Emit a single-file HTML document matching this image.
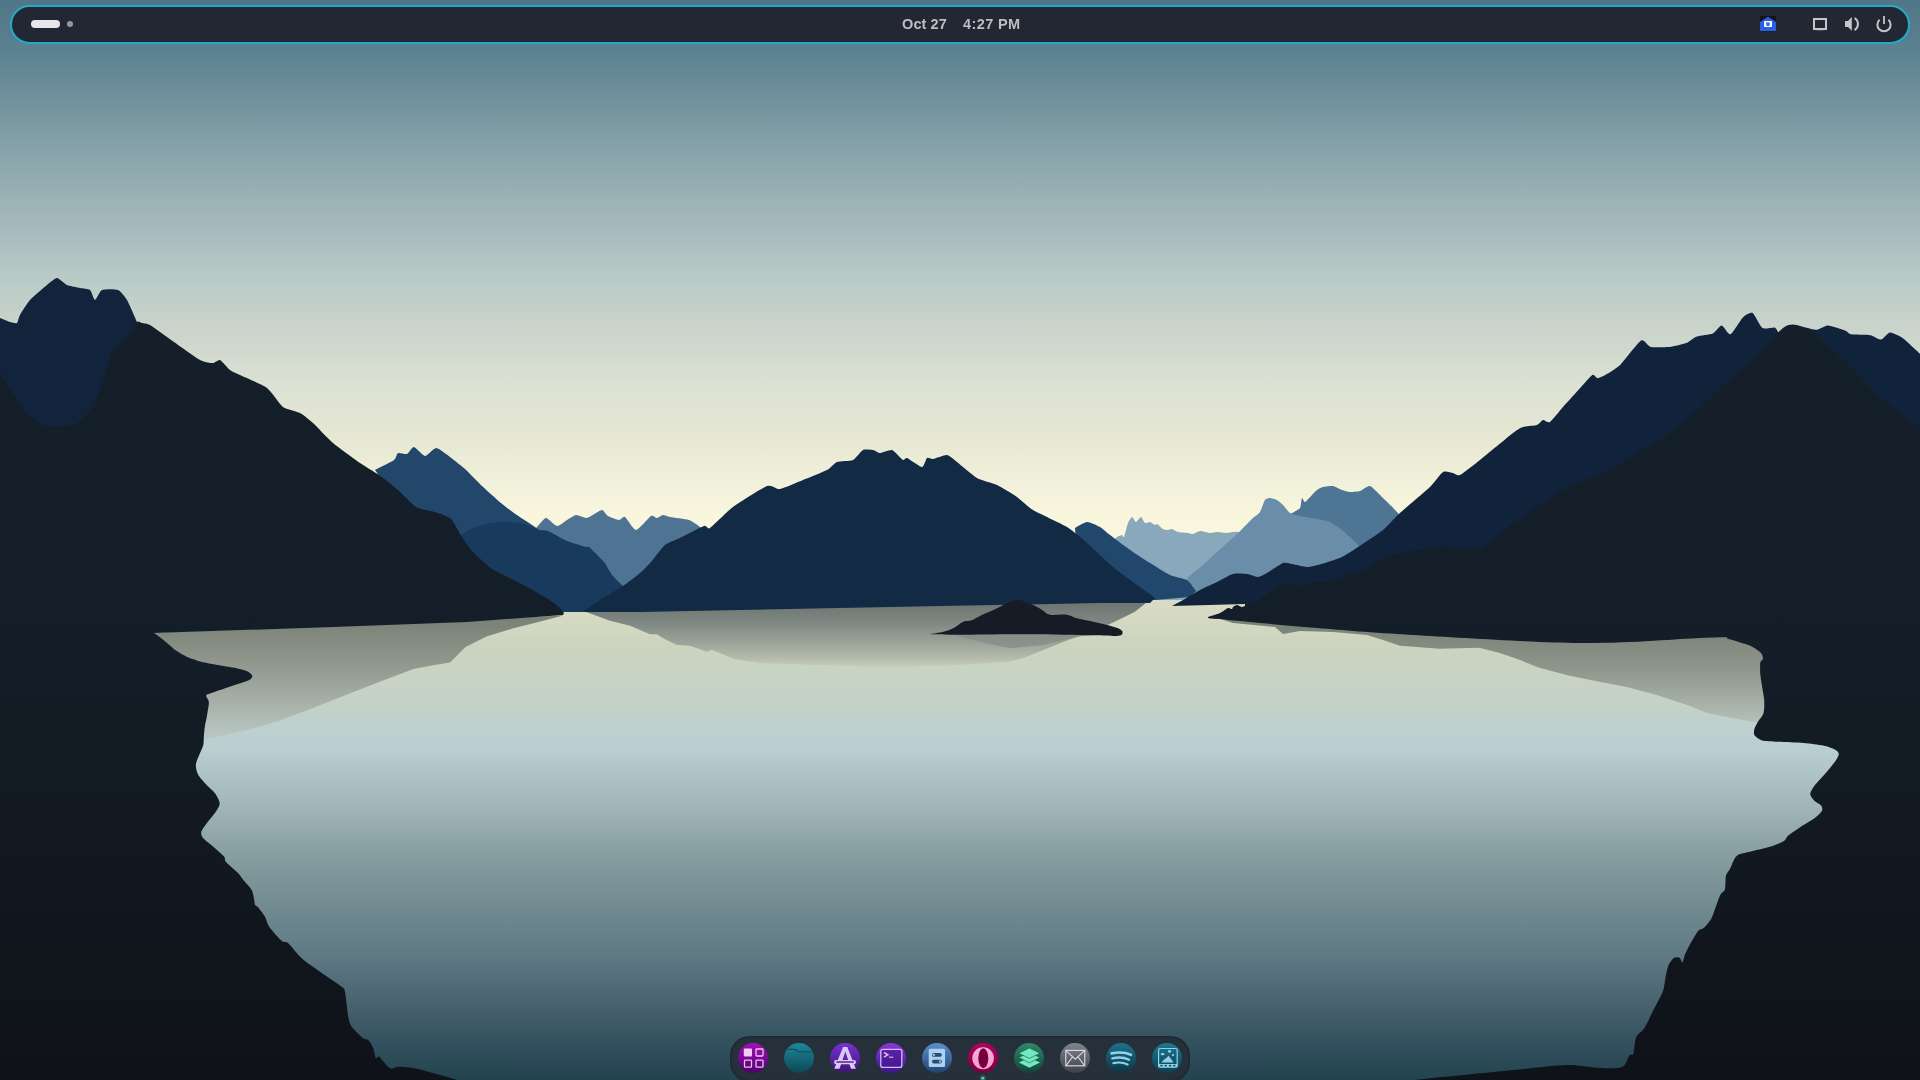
<!DOCTYPE html>
<html><head><meta charset="utf-8"><title>Desktop</title>
<style>
html,body{margin:0;padding:0;width:1920px;height:1080px;overflow:hidden;background:#1a2430;font-family:"Liberation Sans",sans-serif;}
.wp{position:absolute;left:0;top:0;display:block;}
.panel{position:absolute;left:10px;top:5px;width:1900px;height:39px;box-sizing:border-box;border:2px solid #23aac6;border-radius:20px;background:#222733;}
.ws{position:absolute;left:31px;top:20px;width:29px;height:8px;border-radius:4px;background:#e8e6ea;}
.wsd{position:absolute;left:67px;top:21px;width:6px;height:6px;border-radius:3px;background:#98989c;}
.clock{position:absolute;top:15px;height:18px;line-height:18px;font-size:14.5px;letter-spacing:0.55px;font-weight:bold;color:#bdbdc2;white-space:nowrap;will-change:transform;}
.dock{position:absolute;left:730px;top:1036px;width:460px;height:46px;border-radius:20px;background:#25303a;box-shadow:inset 0 0 2px 1px rgba(20,28,36,0.6);}
.ov{position:absolute;left:0;top:0;}
</style></head><body>
<svg class="wp" width="1920" height="1080" viewBox="0 0 1920 1080">
<defs>
<linearGradient id="sky" gradientUnits="userSpaceOnUse" x1="0" y1="0" x2="0" y2="620">
<stop offset="0.0000" stop-color="#4f7688"/>
<stop offset="0.0710" stop-color="#5a7f8f"/>
<stop offset="0.0968" stop-color="#5e8594"/>
<stop offset="0.1613" stop-color="#71929c"/>
<stop offset="0.2258" stop-color="#82a0a7"/>
<stop offset="0.2903" stop-color="#94acb1"/>
<stop offset="0.3226" stop-color="#9ab3b6"/>
<stop offset="0.3710" stop-color="#a7babd"/>
<stop offset="0.4194" stop-color="#b3c5c4"/>
<stop offset="0.4677" stop-color="#bdcdc8"/>
<stop offset="0.5161" stop-color="#c7d2ca"/>
<stop offset="0.5726" stop-color="#d2dacf"/>
<stop offset="0.6290" stop-color="#dde2d4"/>
<stop offset="0.6774" stop-color="#e3e5d3"/>
<stop offset="0.7258" stop-color="#e9ead5"/>
<stop offset="0.7742" stop-color="#f1f0da"/>
<stop offset="0.8306" stop-color="#f9f6de"/>
<stop offset="0.8710" stop-color="#fbf7df"/>
<stop offset="1.0000" stop-color="#fbf7df"/>
</linearGradient>
<linearGradient id="water" gradientUnits="userSpaceOnUse" x1="0" y1="590" x2="0" y2="1080">
<stop offset="0.0000" stop-color="#dadcc4"/>
<stop offset="0.0510" stop-color="#d7dac2"/>
<stop offset="0.1102" stop-color="#ccd4bf"/>
<stop offset="0.1714" stop-color="#c8d3c2"/>
<stop offset="0.2327" stop-color="#c4d1c7"/>
<stop offset="0.2776" stop-color="#bed0ce"/>
<stop offset="0.3224" stop-color="#bacfd2"/>
<stop offset="0.3959" stop-color="#aabfc2"/>
<stop offset="0.4571" stop-color="#9cb2b5"/>
<stop offset="0.5184" stop-color="#8ca3a6"/>
<stop offset="0.5776" stop-color="#7f979b"/>
<stop offset="0.6327" stop-color="#748d93"/>
<stop offset="0.7551" stop-color="#5d7882"/>
<stop offset="0.8367" stop-color="#4a6470"/>
<stop offset="0.9184" stop-color="#34525f"/>
<stop offset="1.0000" stop-color="#23434f"/>
</linearGradient>
<linearGradient id="land" gradientUnits="userSpaceOnUse" x1="0" y1="320" x2="0" y2="1080">
<stop offset="0" stop-color="#141f29"/>
<stop offset="0.42" stop-color="#141e28"/>
<stop offset="1" stop-color="#0f1218"/>
</linearGradient>
<linearGradient id="rL" gradientUnits="userSpaceOnUse" x1="0" y1="615" x2="0" y2="740">
<stop offset="0" stop-color="#787f75"/>
<stop offset="0.36" stop-color="#8e968b"/>
<stop offset="0.68" stop-color="#a5afa7"/>
<stop offset="1" stop-color="#bac8c6"/>
</linearGradient>
<linearGradient id="rC" gradientUnits="userSpaceOnUse" x1="0" y1="605" x2="0" y2="668">
<stop offset="0" stop-color="#6f7773"/>
<stop offset="0.286" stop-color="#808884"/>
<stop offset="0.556" stop-color="#979f96"/>
<stop offset="0.825" stop-color="#b2b9ab"/>
<stop offset="1" stop-color="#c8cfbd"/>
</linearGradient>
<linearGradient id="rR" gradientUnits="userSpaceOnUse" x1="0" y1="622" x2="0" y2="723">
<stop offset="0" stop-color="#788076"/>
<stop offset="0.47" stop-color="#8f978c"/>
<stop offset="0.76" stop-color="#a3ada3"/>
<stop offset="1" stop-color="#b5c0b9"/>
</linearGradient>
</defs>
<rect x="0" y="0" width="1920" height="620" fill="url(#sky)"/>
<rect x="0" y="590" width="1920" height="490" fill="url(#water)"/>
<polygon fill="url(#rL)" points="150,633 563.3,615.6 538.5,622 512.5,628.6 486.5,636.5 465.6,646.9 450,662.5 434.4,665.1 413.5,669 382.3,680.7 345.8,695 309.4,709.4 278.1,721.1 246.9,730.2 200,740.6 150,745"/>
<polygon fill="url(#rC)" points="578,609 1153.3,597 1135,611.7 1116.7,620.8 1093.3,631.7 1068.3,640 1043.3,650 1026.7,656.7 1010,661.7 940,666 880,667 760,663.3 735,659.2 711.7,649.7 706.7,651.7 690,645.8 676.7,645 663.3,638.3 656.7,634.2 650,634.2 630,625.8 610,620.8"/>
<polygon fill="url(#rR)" points="1208,618 1217,618 1233,623 1275,627 1283,634 1300,631 1333,632 1367,635 1383,640 1400,645.7 1439.6,648.7 1479.2,647.7 1499,652.7 1518.8,659.6 1538.6,667.5 1568.3,675.4 1598,681.4 1627.7,687.3 1657.4,695.2 1687.1,705.1 1706.9,713.1 1736.6,719 1762.4,723 1800,723 1800,630 1727,630"/>
<path fill="#8aa8bc" d="M1110,545 C1110.7,544.2 1115.8,538.0 1117.0,537.0 C1118.2,536.0 1121.3,535.0 1122.0,535.0 C1122.7,535.0 1123.4,538.2 1124.0,537.0 C1124.6,535.8 1127.2,525.0 1128.0,523.0 C1128.8,521.0 1131.2,517.1 1132.0,517.0 C1132.8,516.9 1135.1,522.0 1136.0,522.0 C1136.9,522.0 1140.1,516.9 1141.0,517.0 C1141.9,517.1 1144.1,522.5 1145.0,523.0 C1145.9,523.5 1149.0,521.8 1150.0,522.0 C1151.0,522.2 1154.3,524.8 1155.0,525.0 C1155.7,525.2 1156.2,523.6 1157.0,524.0 C1157.8,524.4 1161.9,528.4 1163.0,529.0 C1164.1,529.6 1167.1,530.0 1168.0,530.0 C1168.9,530.0 1171.0,528.8 1172.0,529.0 C1173.0,529.2 1176.4,531.6 1178.0,532.0 C1179.6,532.4 1186.5,532.8 1188.0,533.0 C1189.5,533.2 1191.8,534.2 1193.0,534.0 C1194.2,533.8 1198.3,531.1 1200.0,531.0 C1201.7,530.9 1208.3,532.9 1210.0,533.0 C1211.7,533.1 1215.3,532.0 1217.0,532.0 C1218.7,532.0 1224.9,533.0 1227.0,533.0 C1229.1,533.0 1235.7,531.3 1238.0,532.0 C1240.3,532.7 1248.8,539.2 1250.0,540.0 L1250,600 L1110,600 Z"/>
<path fill="#4e7393" d="M530,535 C530.7,534.2 535.4,528.7 537.0,527.0 C538.6,525.3 544.0,518.1 546.0,518.0 C548.0,517.9 554.9,525.8 557.0,526.0 C559.1,526.2 565.1,521.1 567.0,520.0 C568.9,518.9 574.1,515.2 576.0,515.0 C577.9,514.8 584.5,517.9 586.0,518.0 C587.5,518.1 589.4,516.8 591.0,516.0 C592.6,515.2 600.3,510.0 602.0,510.0 C603.7,510.0 606.3,515.0 608.0,516.0 C609.7,517.0 617.3,519.9 619.0,520.0 C620.7,520.1 623.3,516.0 625.0,517.0 C626.7,518.0 633.4,530.1 636.0,530.0 C638.6,529.9 648.9,517.2 651.0,516.0 C653.1,514.8 655.8,518.1 657.0,518.0 C658.2,517.9 661.7,515.1 663.0,515.0 C664.3,514.9 667.4,516.5 670.0,517.0 C672.6,517.5 686.0,519.0 689.0,520.0 C692.0,521.0 697.9,525.0 700.0,527.0 C702.1,529.0 709.0,538.7 710.0,540.0 L700,600 L530,600 Z"/>
<path fill="#4f7595" d="M1285,515 C1285.7,514.8 1290.5,513.7 1292.0,513.0 C1293.5,512.3 1299.0,509.5 1300.0,508.0 C1301.0,506.5 1301.5,498.6 1302.0,498.0 C1302.5,497.4 1304.0,502.3 1305.0,502.0 C1306.0,501.7 1310.8,496.2 1312.0,495.0 C1313.2,493.8 1315.9,490.8 1317.0,490.0 C1318.1,489.2 1321.4,487.4 1323.0,487.0 C1324.6,486.6 1331.1,485.7 1333.0,486.0 C1334.9,486.3 1340.3,489.4 1342.0,490.0 C1343.7,490.6 1348.2,491.9 1350.0,492.0 C1351.8,492.1 1358.0,491.6 1360.0,491.0 C1362.0,490.4 1367.7,485.3 1370.0,486.0 C1372.3,486.7 1380.2,495.3 1383.0,498.0 C1385.8,500.7 1394.3,508.8 1398.0,513.0 C1401.7,517.2 1417.8,537.3 1420.0,540.0 L1420,600 L1300,600 Z"/>
<path fill="#6a8da9" d="M1187,578 C1188.6,576.7 1200.0,567.6 1203.0,565.0 C1206.0,562.4 1213.5,555.2 1217.0,552.0 C1220.5,548.8 1234.4,536.4 1238.0,533.0 C1241.6,529.6 1250.8,520.1 1253.0,518.0 C1255.2,515.9 1258.8,513.8 1260.0,512.0 C1261.2,510.2 1264.0,501.4 1265.0,500.0 C1266.0,498.6 1268.8,498.0 1270.0,498.0 C1271.2,498.0 1275.7,499.3 1277.0,500.0 C1278.3,500.7 1281.7,503.7 1283.0,505.0 C1284.3,506.3 1288.3,511.9 1290.0,513.0 C1291.7,514.1 1297.3,515.4 1300.0,516.0 C1302.7,516.6 1314.0,518.4 1317.0,519.0 C1320.0,519.6 1327.5,520.9 1330.0,522.0 C1332.5,523.1 1339.2,527.7 1342.0,530.0 C1344.8,532.3 1354.2,541.0 1358.0,545.0 C1361.8,549.0 1377.8,567.5 1380.0,570.0 L1400,600 L1200,600 Z"/>
<path fill="#22476b" d="M375,470 C376.9,469.0 391.7,461.7 394.0,460.0 C396.3,458.3 396.7,453.6 398.0,453.0 C399.3,452.4 405.4,454.6 407.0,454.0 C408.6,453.4 412.2,446.8 414.0,447.0 C415.8,447.2 422.8,455.9 425.0,456.0 C427.2,456.1 433.9,448.2 436.0,448.0 C438.1,447.8 443.1,451.9 446.0,454.0 C448.9,456.1 461.4,465.8 465.0,469.0 C468.6,472.2 478.4,482.6 482.0,486.0 C485.6,489.4 497.8,500.3 501.0,503.0 C504.2,505.7 510.6,510.6 514.0,513.0 C517.4,515.4 530.4,523.8 535.0,527.0 C539.6,530.2 557.5,543.2 560.0,545.0 L600,600 L470,600 Z"/>
<path fill="#183a5d" d="M462,535 C463.1,534.3 470.0,529.2 473.0,528.0 C476.0,526.8 488.3,523.6 492.0,523.0 C495.7,522.4 506.8,521.9 510.0,522.0 C513.2,522.1 521.1,523.2 524.0,524.0 C526.9,524.8 536.6,529.3 539.0,530.0 C541.4,530.7 545.2,529.9 548.0,531.0 C550.8,532.1 563.2,539.4 567.0,541.0 C570.8,542.6 583.8,546.4 586.0,547.0 C588.2,547.6 587.2,545.5 589.0,547.0 C590.8,548.5 601.7,559.2 604.0,562.0 C606.3,564.8 610.1,572.6 612.0,575.0 C613.9,577.4 621.9,584.9 623.0,586.0 L600,612 L440,612 L440,540 Z"/>
<path fill="#22476c" d="M1075,528 C1076.2,527.4 1084.5,522.1 1087.0,522.0 C1089.5,521.9 1097.7,525.7 1100.0,527.0 C1102.3,528.3 1106.7,532.5 1110.0,535.0 C1113.3,537.5 1129.0,549.2 1133.0,552.0 C1137.0,554.8 1146.3,560.7 1150.0,563.0 C1153.7,565.3 1166.3,573.3 1170.0,575.0 C1173.7,576.7 1184.7,578.8 1187.0,580.0 C1189.3,581.2 1192.1,585.9 1193.0,587.0 C1193.9,588.1 1195.7,590.6 1196.0,591.0 L1190,597 L1155,600 L1080,600 Z"/>
<path fill="#132a44" d="M582,612 C583.8,610.8 595.9,602.6 600.0,600.0 C604.1,597.4 619.0,588.7 623.0,586.0 C627.0,583.3 637.2,575.4 640.0,573.0 C642.8,570.6 648.5,564.8 651.0,562.0 C653.5,559.2 662.1,547.4 665.0,545.0 C667.9,542.6 676.1,539.9 680.0,538.0 C683.9,536.1 701.0,527.0 704.0,526.0 C707.0,525.0 707.1,529.9 710.0,528.0 C712.9,526.1 727.3,511.2 733.0,507.0 C738.7,502.8 762.3,487.8 767.0,486.0 C771.7,484.2 776.4,489.6 780.0,489.0 C783.6,488.4 798.3,481.9 803.0,480.0 C807.7,478.1 823.6,471.8 827.0,470.0 C830.4,468.2 834.4,463.0 837.0,462.0 C839.6,461.0 850.4,461.2 853.0,460.0 C855.6,458.8 861.0,451.0 863.0,450.0 C865.0,449.0 871.3,449.7 873.0,450.0 C874.7,450.3 878.1,453.0 880.0,453.0 C881.9,453.0 889.7,449.3 892.0,450.0 C894.3,450.7 901.5,459.2 903.0,460.0 C904.5,460.8 905.1,457.3 907.0,458.0 C908.9,458.7 920.0,467.0 922.0,467.0 C924.0,467.0 925.9,458.8 927.0,458.0 C928.1,457.2 931.0,459.3 933.0,459.0 C935.0,458.7 944.6,454.7 947.0,455.0 C949.4,455.3 954.0,459.7 957.0,462.0 C960.0,464.3 973.0,475.7 977.0,478.0 C981.0,480.3 993.0,483.1 997.0,485.0 C1001.0,486.9 1013.4,494.5 1017.0,497.0 C1020.6,499.5 1028.0,507.0 1033.0,510.0 C1038.0,513.0 1061.6,523.7 1067.0,527.0 C1072.4,530.3 1082.4,539.0 1087.0,543.0 C1091.6,547.0 1107.7,562.6 1113.0,567.0 C1118.3,571.4 1135.8,583.9 1140.0,587.0 C1144.2,590.1 1153.5,596.9 1155.0,598.0 L1150,603 L1100,603 L640,612 Z"/>
<path fill="#11243b" d="M0,318 C1.0,318.4 8.3,321.5 10.0,322.0 C11.7,322.5 16.0,323.7 17.0,323.0 C18.0,322.3 18.7,317.3 20.0,315.0 C21.3,312.7 27.3,303.0 30.0,300.0 C32.7,297.0 44.3,287.2 47.0,285.0 C49.7,282.8 55.0,278.0 57.0,278.0 C59.0,278.0 64.7,284.0 67.0,285.0 C69.3,286.0 77.7,287.5 80.0,288.0 C82.3,288.5 88.5,288.8 90.0,290.0 C91.5,291.2 93.8,300.0 95.0,300.0 C96.2,300.0 99.7,291.0 102.0,290.0 C104.3,289.0 115.5,289.0 118.0,290.0 C120.5,291.0 125.1,296.8 127.0,300.0 C128.9,303.2 136.0,319.8 137.0,322.0 L140,400 L60,440 L0,440 Z"/>
<path fill="#11233b" d="M1172,606 C1173.1,605.4 1180.2,601.6 1183.0,600.0 C1185.8,598.4 1196.6,591.8 1200.0,590.0 C1203.4,588.2 1213.7,583.6 1217.0,582.0 C1220.3,580.4 1230.0,574.8 1233.0,574.0 C1236.0,573.2 1244.5,573.7 1247.0,574.0 C1249.5,574.3 1256.0,577.1 1258.0,577.0 C1260.0,576.9 1264.5,574.4 1267.0,573.0 C1269.5,571.6 1280.5,563.9 1283.0,563.0 C1285.5,562.1 1289.5,563.6 1292.0,564.0 C1294.5,564.4 1304.7,567.1 1308.0,567.0 C1311.3,566.9 1321.6,564.0 1325.0,563.0 C1328.4,562.0 1338.7,558.6 1342.0,557.0 C1345.3,555.4 1353.9,549.7 1358.0,547.0 C1362.1,544.3 1378.8,533.4 1383.0,530.0 C1387.2,526.6 1395.3,517.3 1400.0,513.0 C1404.7,508.7 1425.7,491.1 1430.0,487.0 C1434.3,482.9 1440.7,473.4 1443.0,472.0 C1445.3,470.6 1451.3,472.7 1453.0,473.0 C1454.7,473.3 1457.3,476.3 1460.0,475.0 C1462.7,473.7 1474.7,464.2 1480.0,460.0 C1485.3,455.8 1508.7,436.3 1513.0,433.0 C1517.3,429.7 1520.6,427.8 1523.0,427.0 C1525.4,426.2 1535.0,425.7 1537.0,425.0 C1539.0,424.3 1541.7,420.3 1543.0,420.0 C1544.3,419.7 1548.0,423.3 1550.0,422.0 C1552.0,420.7 1560.0,410.4 1563.0,407.0 C1566.0,403.6 1577.1,391.5 1580.0,388.3 C1582.9,385.1 1590.6,376.0 1592.4,375.0 C1594.2,374.0 1596.1,378.4 1597.7,378.2 C1599.3,378.0 1606.0,374.6 1608.3,373.2 C1610.6,371.8 1617.4,367.7 1620.7,364.4 C1624.0,361.1 1638.1,342.2 1641.1,340.5 C1644.1,338.8 1648.1,346.4 1650.8,347.0 C1653.5,347.6 1665.7,347.2 1668.5,347.0 C1671.3,346.8 1677.4,345.3 1679.2,344.9 C1681.0,344.5 1684.5,344.0 1686.3,343.1 C1688.1,342.2 1694.2,337.4 1696.9,336.4 C1699.6,335.4 1710.3,334.5 1712.8,333.4 C1715.3,332.3 1719.9,325.3 1721.7,325.4 C1723.5,325.5 1728.4,335.1 1730.5,334.3 C1732.6,333.5 1740.7,319.5 1742.9,317.4 C1745.1,315.3 1750.8,311.9 1752.7,313.0 C1754.7,314.1 1760.2,326.7 1762.4,328.1 C1764.6,329.6 1773.0,327.0 1774.8,327.5 C1776.6,328.0 1778.3,333.7 1780.1,333.4 C1781.9,333.1 1789.0,324.9 1792.5,324.5 C1796.0,324.1 1812.0,329.7 1815.5,329.8 C1819.0,329.9 1824.9,325.3 1827.9,325.4 C1830.9,325.5 1843.3,329.8 1845.6,330.7 C1847.9,331.6 1848.5,333.9 1851.0,334.3 C1853.5,334.8 1867.4,334.7 1870.4,335.2 C1873.4,335.7 1879.0,339.9 1881.0,339.6 C1883.0,339.3 1887.8,332.7 1889.9,332.5 C1892.0,332.3 1899.3,335.7 1902.3,337.8 C1905.3,339.9 1918.2,352.2 1920.0,353.8 L1920,620 L1245,620 L1245,604 Z"/>
<polygon fill="#858d86" opacity="0.8" points="953.3,635 1093,635 1076.7,636.7 1043,645 1010,648.3 985,643"/>
<path fill="#151c26" d="M930,634.2 C932.2,633.8 939.4,632.7 943.3,631.7 C947.2,630.7 950.0,630.0 953.3,628.3 C956.6,626.6 960.2,623.0 963.3,621.7 C966.4,620.4 968.6,621.4 971.7,620.3 C974.8,619.2 978.1,616.7 981.7,615.0 C985.3,613.3 989.7,611.7 993.3,610.0 C996.9,608.3 1000.5,606.4 1003.3,605.0 C1006.1,603.6 1007.5,602.5 1010.0,601.7 C1012.5,600.9 1015.5,599.9 1018.3,600.0 C1021.1,600.1 1023.6,601.4 1026.7,602.5 C1029.8,603.6 1033.9,605.3 1036.7,606.7 C1039.5,608.1 1041.1,609.5 1043.3,610.8 C1045.5,612.1 1046.1,614.1 1050.0,614.7 C1053.9,615.4 1062.2,614.1 1066.7,614.7 C1071.2,615.3 1072.3,617.1 1076.7,618.3 C1081.1,619.5 1087.8,620.5 1093.3,621.7 C1098.8,623.0 1105.5,624.5 1110.0,625.8 C1114.5,627.0 1117.9,628.1 1120.0,629.2 C1122.1,630.3 1122.8,631.4 1122.5,632.5 C1122.2,633.6 1123.2,635.3 1118.3,635.8 C1113.4,636.3 1108.6,635.6 1093.3,635.3 C1078.0,635.0 1048.9,634.3 1026.7,634.2 C1004.5,634.1 976.1,634.7 960.0,634.7 C943.9,634.7 935.0,634.3 930.0,634.2 Z"/>
<path fill="url(#land)" d="M0,373 C1.7,375.7 14.3,396.0 17.0,400.0 C19.7,404.0 24.4,410.5 27.0,413.0 C29.6,415.5 39.7,423.6 43.0,425.0 C46.3,426.4 56.6,427.2 60.0,427.0 C63.4,426.8 74.0,424.7 77.0,423.0 C80.0,421.3 87.7,413.3 90.0,410.0 C92.3,406.7 98.3,394.3 100.0,390.0 C101.7,385.7 105.7,371.0 107.0,367.0 C108.3,363.0 111.0,353.0 113.0,350.0 C115.0,347.0 124.6,339.8 127.0,337.0 C129.4,334.2 135.5,323.4 137.0,322.0 C138.5,320.6 140.7,322.7 142.0,323.0 C143.3,323.3 147.5,323.6 150.0,325.0 C152.5,326.4 162.0,333.5 167.0,337.0 C172.0,340.5 195.4,357.4 200.0,360.0 C204.6,362.6 211.0,363.0 213.0,363.0 C215.0,363.0 218.3,359.3 220.0,360.0 C221.7,360.7 228.0,368.5 230.0,370.0 C232.0,371.5 236.3,373.2 240.0,375.0 C243.7,376.8 262.7,384.8 267.0,388.0 C271.3,391.2 279.7,404.5 283.0,407.0 C286.3,409.5 297.0,411.4 300.0,413.0 C303.0,414.6 309.7,420.0 313.0,423.0 C316.3,426.0 328.3,439.0 333.0,443.0 C337.7,447.0 355.4,459.8 360.0,463.0 C364.6,466.2 375.2,472.3 379.0,475.0 C382.8,477.7 394.3,486.8 398.0,490.0 C401.7,493.2 412.3,504.8 416.0,507.0 C419.7,509.2 432.0,511.1 435.0,512.0 C438.0,512.9 444.3,515.2 446.0,516.0 C447.7,516.8 450.4,517.9 452.0,520.0 C453.6,522.1 459.9,533.8 462.0,537.0 C464.1,540.2 470.0,548.8 473.0,552.0 C476.0,555.2 488.3,566.4 492.0,569.0 C495.7,571.6 506.3,576.1 510.0,578.0 C513.7,579.9 525.2,585.9 529.0,588.0 C532.8,590.1 545.0,597.1 548.0,599.0 C551.0,600.9 557.4,605.6 559.0,607.0 C560.6,608.4 563.5,612.4 564.0,613.0 L563,615 L467,622 L333,627 L154,633 C155.1,633.8 160.2,637.4 162.2,638.9 C164.2,640.4 167.0,642.8 168.9,644.4 C170.8,646.0 174.3,649.5 176.7,651.1 C179.1,652.7 183.4,655.3 186.7,656.7 C190.0,658.1 197.0,660.6 201.1,661.7 C205.2,662.8 213.4,664.2 217.8,665.0 C222.2,665.8 230.5,667.0 234.4,667.8 C238.3,668.6 244.3,670.1 246.7,671.1 C249.1,672.1 251.8,674.5 252.2,675.6 C252.6,676.7 251.6,678.4 250.0,679.4 C248.4,680.4 243.1,682.2 240.0,683.3 C236.9,684.4 230.4,686.5 226.7,687.8 C223.0,689.1 214.9,691.8 212.2,692.8 C209.5,693.8 206.5,694.3 206.1,695.6 C205.7,696.9 208.8,699.7 208.9,702.2 C209.0,704.7 207.7,711.3 207.2,714.4 C206.7,717.5 205.5,722.6 205.0,725.6 C204.5,728.6 204.0,734.4 203.8,737.0 C203.6,739.6 203.9,742.6 203.3,745.0 C202.7,747.4 200.2,752.3 199.2,755.0 C198.2,757.7 195.9,762.3 195.8,765.0 C195.7,767.7 196.8,772.3 198.3,775.0 C199.8,777.7 204.5,782.6 206.7,785.0 C208.9,787.4 213.3,790.9 215.0,793.3 C216.7,795.7 219.6,800.8 219.7,803.3 C219.8,805.8 217.5,809.0 215.8,811.7 C214.1,814.4 208.6,820.6 206.7,823.3 C204.8,826.0 201.8,829.7 201.3,831.7 C200.8,833.7 201.7,836.3 203.3,838.3 C204.9,840.3 210.5,844.2 213.3,846.7 C216.1,849.2 222.5,854.7 224.2,856.7 C225.9,858.7 223.9,859.5 225.8,861.7 C227.7,863.9 236.0,870.9 238.3,873.3 C240.6,875.7 241.5,877.8 243.3,880.0 C245.1,882.2 250.2,887.3 251.7,890.0 C253.2,892.7 253.8,898.0 254.2,900.0 C254.6,902.0 254.5,904.0 255.0,905.0 C255.5,906.0 257.0,905.9 258.3,907.5 C259.6,909.1 263.5,914.1 265.0,916.7 C266.5,919.3 267.0,923.5 269.2,926.7 C271.4,929.9 279.2,938.6 281.7,940.8 C284.2,943.0 285.6,941.0 288.3,943.3 C291.0,945.6 297.5,954.5 301.7,958.3 C305.9,962.1 314.7,967.9 320.0,971.7 C325.3,975.5 338.4,984.0 341.7,986.7 C345.0,989.4 344.1,987.7 345.0,991.7 C345.9,995.7 347.4,1012.0 348.3,1016.7 C349.2,1021.4 349.7,1023.8 351.7,1026.7 C353.7,1029.6 361.1,1036.5 363.3,1038.3 C365.5,1040.1 367.0,1038.7 368.3,1040.0 C369.6,1041.3 372.3,1045.9 373.3,1048.3 C374.3,1050.7 375.0,1057.2 375.8,1058.3 C376.6,1059.4 377.3,1055.4 379.2,1056.7 C381.1,1058.0 387.5,1067.0 390.0,1068.3 C392.5,1069.6 395.0,1066.7 398.3,1066.7 C401.6,1066.7 409.4,1067.2 415.0,1068.3 C420.6,1069.4 434.4,1073.4 440.0,1075.0 C445.6,1076.6 452.7,1078.5 456.7,1080.0 C460.7,1081.5 468.2,1085.2 470.0,1086.0 L0,1090 Z"/>
<path fill="url(#land)" d="M1208,617 C1209.2,616.6 1218.0,613.9 1220.0,613.0 C1222.0,612.1 1226.8,608.4 1228.0,608.0 C1229.2,607.6 1231.5,609.1 1232.0,609.0 C1232.5,608.9 1232.5,607.4 1233.0,607.0 C1233.5,606.6 1236.1,605.0 1237.0,605.0 C1237.9,605.0 1241.0,607.0 1242.0,607.0 C1243.0,607.0 1245.4,605.7 1247.0,605.0 C1248.6,604.3 1255.2,601.7 1258.0,600.0 C1260.8,598.3 1272.5,589.7 1275.0,588.0 C1277.5,586.3 1280.5,583.3 1283.0,583.0 C1285.5,582.7 1296.6,585.1 1300.0,585.0 C1303.4,584.9 1313.7,582.5 1317.0,582.0 C1320.3,581.5 1329.7,580.9 1333.0,580.0 C1336.3,579.1 1346.6,574.2 1350.0,573.0 C1353.4,571.8 1363.7,569.5 1367.0,568.0 C1370.3,566.5 1379.7,559.5 1383.0,558.0 C1386.3,556.5 1394.3,554.1 1400.0,553.0 C1405.7,551.9 1432.0,547.5 1440.0,547.0 C1448.0,546.5 1472.7,550.4 1480.0,548.0 C1487.3,545.6 1504.7,528.8 1513.0,523.0 C1521.3,517.2 1553.0,495.6 1563.0,490.0 C1573.0,484.4 1603.0,472.3 1613.0,467.0 C1623.0,461.7 1654.6,442.7 1663.0,437.0 C1671.4,431.3 1688.6,417.4 1697.0,410.0 C1705.4,402.6 1738.4,371.2 1747.0,363.0 C1755.6,354.8 1778.4,331.8 1783.0,328.0 C1787.6,324.2 1790.0,324.6 1793.0,325.0 C1796.0,325.4 1807.6,328.2 1813.0,332.0 C1818.4,335.8 1840.3,356.5 1847.0,363.0 C1853.7,369.5 1872.7,390.6 1880.0,397.0 C1887.3,403.4 1916.0,424.0 1920.0,427.0 L1920,1090 L1400,1090 L1400,1082 C1401.7,1081.7 1397.9,1081.6 1413.0,1080.0 C1428.1,1078.4 1492.5,1072.0 1513.0,1070.0 C1533.5,1068.0 1555.4,1065.3 1567.0,1065.0 C1578.6,1064.7 1592.6,1067.7 1600.0,1068.0 C1607.4,1068.3 1618.3,1068.7 1622.2,1067.0 C1626.1,1065.3 1628.1,1056.7 1629.6,1055.0 C1631.1,1053.3 1632.4,1056.4 1633.3,1054.1 C1634.2,1051.8 1634.6,1040.9 1636.1,1037.4 C1637.6,1033.9 1642.1,1031.8 1644.4,1028.1 C1646.7,1024.4 1651.2,1014.5 1653.7,1009.6 C1656.2,1004.7 1661.4,995.5 1663.0,991.1 C1664.6,986.7 1665.0,979.8 1665.7,976.3 C1666.4,972.8 1667.4,967.7 1668.5,965.2 C1669.6,962.7 1672.6,958.8 1674.1,957.8 C1675.6,956.8 1678.5,957.2 1679.6,957.8 C1680.7,958.4 1681.7,962.9 1682.4,962.4 C1683.1,961.9 1684.1,956.7 1685.2,954.1 C1686.3,951.5 1689.0,946.1 1690.7,943.0 C1692.4,939.9 1696.4,932.9 1698.1,930.9 C1699.8,928.9 1702.0,929.7 1703.7,928.1 C1705.4,926.5 1709.6,921.4 1711.1,918.9 C1712.6,916.4 1713.6,912.8 1714.8,909.6 C1716.0,906.4 1719.0,897.5 1720.4,894.8 C1721.8,892.1 1724.3,891.8 1725.0,889.3 C1725.7,886.8 1725.3,878.5 1725.9,875.8 C1726.5,873.1 1728.7,871.6 1729.8,869.3 C1730.9,867.0 1733.2,860.9 1734.4,858.9 C1735.6,856.9 1736.6,855.4 1738.9,854.4 C1741.2,853.4 1747.4,852.3 1751.9,851.2 C1756.4,850.1 1768.3,847.4 1772.6,846.0 C1776.9,844.6 1782.2,842.2 1784.3,840.8 C1786.4,839.4 1785.9,837.5 1788.2,835.6 C1790.5,833.7 1797.6,828.9 1801.2,826.5 C1804.8,824.1 1812.6,819.5 1815.4,817.4 C1818.2,815.3 1821.1,812.5 1821.9,811.0 C1822.7,809.5 1822.3,807.2 1821.3,805.8 C1820.3,804.4 1815.6,802.2 1814.1,800.6 C1812.6,799.0 1810.2,796.0 1810.2,794.1 C1810.2,792.2 1812.2,788.9 1814.1,786.3 C1816.0,783.7 1821.7,777.9 1824.5,774.6 C1827.3,771.3 1833.0,764.5 1834.9,761.7 C1836.8,758.9 1838.8,755.5 1838.8,753.9 C1838.8,752.3 1836.9,750.6 1834.8,749.5 C1832.7,748.4 1827.3,746.5 1823.2,745.6 C1819.1,744.7 1809.8,743.5 1803.7,743.0 C1797.6,742.5 1783.3,742.0 1777.8,741.7 C1772.3,741.4 1765.3,741.3 1762.2,740.4 C1759.1,739.5 1755.5,736.7 1754.5,735.2 C1753.5,733.7 1754.0,730.7 1754.5,728.8 C1755.0,726.9 1757.2,723.1 1758.4,721.0 C1759.6,718.9 1762.7,716.0 1763.5,713.2 C1764.3,710.4 1764.4,703.7 1764.2,700.2 C1764.0,696.7 1762.7,690.8 1762.2,687.3 C1761.7,683.8 1760.6,677.6 1760.3,674.3 C1760.0,671.0 1760.0,664.7 1760.3,662.6 C1760.6,660.5 1762.8,660.0 1762.9,658.7 C1763.0,657.4 1762.5,654.5 1761.0,652.9 C1759.5,651.3 1754.8,647.9 1751.9,646.4 C1749.0,644.9 1742.2,642.9 1738.9,641.9 C1735.6,640.9 1728.9,639.2 1727.2,638.6 C1725.5,638.0 1729.5,637.4 1725.9,637.3 C1722.3,637.2 1703.5,637.9 1700.0,638.0 C1680.0,638.8 1627.8,643.5 1580.0,643.0 C1532.2,642.5 1456.8,637.5 1413.0,635.0 C1369.2,632.5 1344.2,630.2 1317.0,628.0 C1289.8,625.8 1268.2,623.7 1250.0,622.0 C1231.8,620.3 1215.0,618.7 1208.0,618.0 Z"/>
</svg>
<div class="panel"></div>
<div class="ws"></div><div class="wsd"></div>
<div class="clock" style="left:902px;letter-spacing:0.1px">Oct 27</div>
<div class="clock" style="left:963px;letter-spacing:0.4px">4:27 PM</div>
<div class="dock"></div>
<svg class="ov" width="1920" height="1080" viewBox="0 0 1920 1080">
<rect x="1760" y="16" width="16" height="15.5" fill="#12161c"/>
<path d="M1760,22 L1768,16.8 L1776,22 L1776,31 L1760,31 Z" fill="#2b5fe6"/>
<rect x="1764" y="21" width="8" height="6" rx="1" fill="#ffffff"/>
<path d="M1766,22.2 L1770,22.6 L1769.6,26 L1766.4,26 Z" fill="#3a6fe8"/>
<path d="M1760,25 L1768,29.5 L1776,25 L1776,31 L1760,31 Z" fill="#2b5fe6"/>
<g fill="none" stroke="#c6c6ca" stroke-width="2">
<rect x="1814" y="19" width="12" height="10"/>
</g>
<rect x="1816.4" y="28.6" width="7.4" height="1.6" rx="0.6" fill="#c6c6ca"/>
<path d="M1845,20.9 L1848,20.9 L1851.8,17 L1851.8,30.8 L1848,27.1 L1845,27.1 Z" fill="#c6c6ca"/>
<path d="M1854.6,18 A7.2,7.2 0 0 1 1854.6,30.2" fill="none" stroke="#c6c6ca" stroke-width="2"/>
<path d="M1879.6,19.8 A6.6,6.6 0 1 0 1888.4,19.8" fill="none" stroke="#c6c6ca" stroke-width="2"/>
<line x1="1884" y1="16" x2="1884" y2="24" stroke="#c6c6ca" stroke-width="1.8"/>

<defs>
<linearGradient id="g1" x1="0" y1="0" x2="0" y2="1"><stop offset="0" stop-color="#a012b8"/><stop offset="1" stop-color="#50006a"/></linearGradient>
<linearGradient id="g2" x1="0" y1="0" x2="0" y2="1"><stop offset="0" stop-color="#1f8898"/><stop offset="1" stop-color="#0b4756"/></linearGradient>
<linearGradient id="g3" x1="0" y1="0" x2="0" y2="1"><stop offset="0" stop-color="#7a30d8"/><stop offset="1" stop-color="#3c176e"/></linearGradient>
<linearGradient id="g4" x1="0" y1="0" x2="0" y2="1"><stop offset="0" stop-color="#8a38da"/><stop offset="1" stop-color="#3d168a"/></linearGradient>
<linearGradient id="g5" x1="0" y1="0" x2="0" y2="1"><stop offset="0" stop-color="#5b8fcf"/><stop offset="1" stop-color="#22426e"/></linearGradient>
<linearGradient id="g6" x1="0" y1="0" x2="0" y2="1"><stop offset="0" stop-color="#b5005c"/><stop offset="1" stop-color="#78003e"/></linearGradient>
<linearGradient id="g7" x1="0" y1="0" x2="0" y2="1"><stop offset="0" stop-color="#2d8a64"/><stop offset="1" stop-color="#14433a"/></linearGradient>
<linearGradient id="g8" x1="0" y1="0" x2="0" y2="1"><stop offset="0" stop-color="#80868f"/><stop offset="1" stop-color="#3c414b"/></linearGradient>
<linearGradient id="g9" x1="0" y1="0" x2="0" y2="1"><stop offset="0" stop-color="#20708a"/><stop offset="1" stop-color="#0c3644"/></linearGradient>
<linearGradient id="g10" x1="0" y1="0" x2="0" y2="1"><stop offset="0" stop-color="#1f7890"/><stop offset="1" stop-color="#0d3e4e"/></linearGradient>
<linearGradient id="op" x1="0" y1="0" x2="0" y2="1"><stop offset="0" stop-color="#f7b0dc"/><stop offset="1" stop-color="#f29cd0"/></linearGradient>
</defs>
<!-- 1 grid -->
<circle cx="753" cy="1058" r="15" fill="url(#g1)"/>
<rect x="743.8" y="1048.4" width="8.2" height="8.2" rx="1" fill="#f3c9f8"/>
<rect x="756" y="1049" width="7" height="7" rx="0.8" fill="none" stroke="#efbdf5" stroke-width="1.3"/>
<rect x="744.5" y="1060.2" width="7" height="7" rx="0.8" fill="none" stroke="#efbdf5" stroke-width="1.3"/>
<rect x="756" y="1060.2" width="7" height="7" rx="0.8" fill="none" stroke="#efbdf5" stroke-width="1.3"/>
<!-- 2 folder -->
<circle cx="799" cy="1058" r="15" fill="url(#g2)"/>
<path d="M787.5,1049.2 L794.5,1049.4 Q796.5,1049.6 797.8,1051.6 L811.8,1051.9" fill="none" stroke="#0e4f5c" stroke-width="1.1"/>
<!-- 3 A -->
<circle cx="845" cy="1058" r="15" fill="url(#g3)"/>
<path d="M843.1,1047 L847.3,1047 L855.8,1068.8 L851,1068.8 L845.4,1051.6 L839.5,1068.8 L834.3,1068.8 Z" fill="#dcc8f8"/>
<rect x="834.1" y="1059.9" width="21.9" height="4.4" rx="2.2" fill="#dcc8f8"/>
<rect x="836.2" y="1061.3" width="17.8" height="1.5" rx="0.7" fill="#4e2c86"/>
<!-- 4 terminal -->
<circle cx="891" cy="1058" r="15" fill="url(#g4)"/>
<rect x="880.8" y="1049.4" width="21" height="18" rx="2" fill="#3f1888" fill-opacity="0.55" stroke="#d9b9f6" stroke-width="1.3"/>
<path d="M884,1052.5 L887.8,1054.8 L884,1057.1" fill="none" stroke="#d9b9f6" stroke-width="1.5"/>
<rect x="889" y="1056.6" width="4.3" height="1.1" fill="#d9b9f6"/>
<!-- 5 settings -->
<circle cx="937" cy="1058" r="15" fill="url(#g5)"/>
<rect x="928.7" y="1048.8" width="16.4" height="18.2" rx="1.5" fill="#a9d2f2"/>
<rect x="932" y="1053" width="9.8" height="3.8" rx="1.9" fill="#2b4c70"/>
<rect x="932" y="1059.7" width="9.8" height="3.8" rx="1.9" fill="#2b4c70"/>
<circle cx="933.9" cy="1054.9" r="1.1" fill="#a9d2f2"/>
<circle cx="939.9" cy="1061.6" r="1.1" fill="#a9d2f2"/>
<!-- 6 opera -->
<circle cx="983" cy="1058" r="15" fill="url(#g6)"/>
<ellipse cx="983.1" cy="1058.2" rx="10.8" ry="11" fill="url(#op)"/>
<ellipse cx="983.3" cy="1058.2" rx="5" ry="10" fill="#76003a"/>
<circle cx="982.8" cy="1078.3" r="1.3" fill="#5fd6c2"/>
<circle cx="982.8" cy="1078.3" r="3" fill="#5fd6c2" opacity="0.25"/>
<!-- 7 layers -->
<circle cx="1029" cy="1058" r="15" fill="url(#g7)"/>
<path d="M1018.8,1062.6 L1029.4,1057.4 L1040,1062.6 L1029.4,1067.8 Z" fill="#72e8c2"/>
<path d="M1018.8,1057.6 L1029.4,1052.4 L1040,1057.6 L1029.4,1062.8 Z" fill="#72e8c2" stroke="#1e5a48" stroke-width="0.6"/>
<path d="M1018.8,1053.2 L1029.4,1048 L1040,1053.2 L1029.4,1058.4 Z" fill="#72e8c2" stroke="#1e5a48" stroke-width="0.6"/>
<!-- 8 mail -->
<circle cx="1075" cy="1058" r="15" fill="url(#g8)"/>
<rect x="1065.8" y="1050.4" width="19" height="15.4" fill="none" stroke="#d6d6da" stroke-width="1.2"/>
<path d="M1066,1050.6 L1075.3,1059.2 L1084.6,1050.6 M1066,1065.6 L1072.4,1057.2 M1084.6,1065.6 L1078.2,1057.2" fill="none" stroke="#d6d6da" stroke-width="1.1"/>
<!-- 9 spotify -->
<circle cx="1121" cy="1058" r="15" fill="url(#g9)"/>
<path d="M1111.6,1053.4 Q1123,1051.2 1131,1054.8" fill="none" stroke="#8fd2ea" stroke-width="2.6" stroke-linecap="round"/>
<path d="M1112.4,1058.4 Q1122,1056.2 1129,1059.8" fill="none" stroke="#8fd2ea" stroke-width="2.4" stroke-linecap="round"/>
<path d="M1113.4,1063.1 Q1121.5,1061.4 1127.6,1064.4" fill="none" stroke="#8fd2ea" stroke-width="2.2" stroke-linecap="round"/>
<!-- 10 image viewer -->
<circle cx="1167" cy="1058" r="15" fill="url(#g10)"/>
<rect x="1158.6" y="1048.5" width="18.6" height="18.7" rx="1.5" fill="none" stroke="#8ed2ea" stroke-width="1.2"/>
<rect x="1158.6" y="1064" width="18.6" height="3.2" fill="#8ed2ea"/>
<rect x="1160.3" y="1064.9" width="2.3" height="1.5" fill="#0f4a5a"/>
<rect x="1164.6" y="1064.9" width="2.3" height="1.5" fill="#0f4a5a"/>
<rect x="1168.9" y="1064.9" width="2.3" height="1.5" fill="#0f4a5a"/>
<rect x="1173.2" y="1064.9" width="2.3" height="1.5" fill="#0f4a5a"/>
<path d="M1162,1062.6 L1168.6,1055.8 L1173.6,1062.6 Z" fill="#8ed2ea"/>
<path d="M1161.5,1062.6 L1165.5,1058.5" fill="none" stroke="#8ed2ea" stroke-width="0.8"/>
<ellipse cx="1162.6" cy="1054.2" rx="2" ry="1.1" fill="#8ed2ea"/>
<ellipse cx="1169.5" cy="1051.4" rx="1.6" ry="1.3" fill="#8ed2ea"/>
<ellipse cx="1173" cy="1055" rx="1.2" ry="1" fill="#8ed2ea"/>

</svg>
</body></html>
